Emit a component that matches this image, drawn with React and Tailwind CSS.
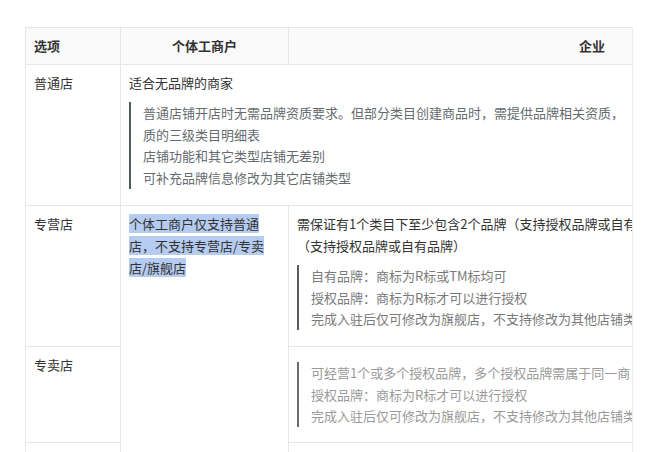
import React from 'react';

// 店铺类型对比表（截图复刻）
const font = { fontFamily: '"Noto Sans CJK SC", "Noto Sans", sans-serif' };

function Quote({ lines, tone }) {
  return (
    <div className={`mt-2 mb-2 border-l-2 pl-3 ${tone === 'light' ? 'border-[#6b6b6b] text-[#9a9a9a]' : tone === 'mid' ? 'border-[#5a5a5a] text-[#7a7a7a]' : 'border-[#4f5a5a] text-[#666b70]'}`}>
      {lines.map((l, i) => (
        <div key={i} className="whitespace-nowrap leading-[21.7px]">{l}</div>
      ))}
    </div>
  );
}

export default function App() {
  const border = 'border border-[#e6e6e6] px-2';
  const cell = `${border} align-top`;
  return (
    <div className="w-[650px] h-[452px] bg-white overflow-hidden pt-[27px] pl-[25px]" style={font}>
      <div className="w-[608px] overflow-hidden border-r border-[#ececec]">
        <table className="table-fixed border-collapse w-[870px] text-[13px] text-[#333]">
          <colgroup>
            <col className="w-[95px]" />
            <col className="w-[168px]" />
            <col className="w-[607px]" />
          </colgroup>
          <thead>
            <tr className="h-[37px] bg-[#fafafa]">
              <th className={`${border} align-middle text-left font-bold leading-[22px]`}>选项</th>
              <th className={`${border} align-middle text-center font-bold leading-[22px]`}>个体工商户</th>
              <th className={`${border} align-middle text-center font-bold leading-[22px]`}>企业</th>
            </tr>
          </thead>
          <tbody>
            <tr>
              <td className={`${cell} pt-[7px] pb-2 leading-[22px]`}>普通店</td>
              <td colSpan={2} className={`${cell} pt-[7px] pb-2`}>
                <div className="leading-[22px]">适合无品牌的商家</div>
                <Quote
                  lines={[
                    '普通店铺开店时无需品牌资质要求。但部分类目创建商品时，需提供品牌相关资质，',
                    '质的三级类目明细表',
                    '店铺功能和其它类型店铺无差别',
                    '可补充品牌信息修改为其它店铺类型',
                  ]}
                />
              </td>
            </tr>
            <tr>
              <td className={`${cell} pt-[7px] pb-2 leading-[22px]`}>专营店</td>
              <td rowSpan={3} className={`${cell} pt-[7px] pb-2 leading-[22px]`}>
                <span className="bg-[#b5cbef]">个体工商户仅支持普通</span>
                <br />
                <span className="bg-[#b5cbef]">店，不支持专营店/专卖</span>
                <br />
                <span className="bg-[#b5cbef]">店/旗舰店</span>
              </td>
              <td className={`${cell} pt-[7px] pb-2`}>
                <div className="whitespace-nowrap leading-[22px]">需保证有1个类目下至少包含2个品牌（支持授权品牌或自有</div>
                <div className="whitespace-nowrap leading-[22px]">（支持授权品牌或自有品牌）</div>
                <Quote
                  tone="mid"
                  lines={[
                    '自有品牌：商标为R标或TM标均可',
                    '授权品牌：商标为R标才可以进行授权',
                    '完成入驻后仅可修改为旗舰店，不支持修改为其他店铺类型',
                  ]}
                />
              </td>
            </tr>
            <tr>
              <td className={`${cell} pt-[7px] pb-2 leading-[22px]`}>专卖店</td>
              <td className={`${cell} pt-[7px] pb-[7px]`}>
                <Quote
                  tone="light"
                  lines={[
                    '可经营1个或多个授权品牌，多个授权品牌需属于同一商',
                    '授权品牌：商标为R标才可以进行授权',
                    '完成入驻后仅可修改为旗舰店，不支持修改为其他店铺类型',
                  ]}
                />
              </td>
            </tr>
            <tr className="h-[40px]">
              <td className={cell}></td>
              <td className={cell}></td>
            </tr>
          </tbody>
        </table>
      </div>
    </div>
  );
}
